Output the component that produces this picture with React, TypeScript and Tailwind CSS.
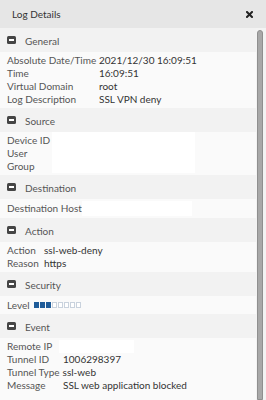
import React from "react";

function MinusIcon() {
  return (
    <span className="flex h-[8px] w-[9px] items-center justify-center rounded-[1.5px] bg-[#454545]">
      <span className="h-[1.5px] w-[5px] bg-white" />
    </span>
  );
}

function SectionHeader({ title }: { title: string }) {
  return (
    <div className="flex h-6 items-center gap-[9px] bg-[#f2f2f2] pl-[7px]">
      <MinusIcon />
      <span className="mt-[3px] text-[10px] text-[#555]">{title}</span>
    </div>
  );
}

interface RowProps {
  label: string;
  value?: React.ReactNode;
  labelWidth: string;
}

function Row({ label, value, labelWidth }: RowProps) {
  return (
    <div className="flex h-[13px] items-center whitespace-nowrap text-[10px] leading-[13px]">
      <span className={`${labelWidth} shrink-0 text-[#555]`}>{label}</span>
      <span className="text-[#333]">{value}</span>
    </div>
  );
}

function LevelBar({ level, total }: { level: number; total: number }) {
  return (
    <div className="flex gap-[1px]">
      {Array.from({ length: total }).map((_, i) => (
        <span
          key={i}
          className={
            i < level
              ? "h-[6px] w-[5px] bg-[#1f5c99]"
              : "h-[6px] w-[5px] border border-[#c9d2dd] bg-white"
          }
        />
      ))}
    </div>
  );
}

export default function App() {
  return (
    <div className="h-[400px] w-[266px] overflow-hidden bg-[#fafafa] font-['Lato',sans-serif]">
      <div className="flex h-[28px] items-center justify-between bg-[#e6e6e6] pl-[12px] pr-[13px]">
        <span className="text-[10px] text-[#333]">Log Details</span>
        <svg width="7" height="7" viewBox="0 0 7 7">
          <path d="M1 1 L6 6 M6 1 L1 6" stroke="#222" strokeWidth="2" strokeLinecap="square" />
        </svg>
      </div>

      <div className="flex">
        <div className="w-[256px] shrink-0">
          <SectionHeader title="General" />
          <div className="px-[7px] py-[2px]">
            <Row labelWidth="w-[92px]" label="Absolute Date/Time" value="2021/12/30 16:09:51" />
            <Row labelWidth="w-[92px]" label="Time" value="16:09:51" />
            <Row labelWidth="w-[92px]" label="Virtual Domain" value="root" />
            <Row labelWidth="w-[92px]" label="Log Description" value="SSL VPN deny" />
          </div>

          <SectionHeader title="Source" />
          <div className="flex items-start px-[7px]">
            <div className="w-[45px] shrink-0 whitespace-nowrap py-[2px] text-[10px] leading-[13px] text-[#555]">
              <div>Device ID</div>
              <div>User</div>
              <div>Group</div>
            </div>
            <div className="mb-[2px] h-[41px] w-[143px] bg-white" />
          </div>

          <SectionHeader title="Destination" />
          <div className="flex items-center px-[7px] py-[2px]">
            <span className="w-[75px] shrink-0 whitespace-nowrap text-[10px] leading-[15px] text-[#555]">Destination Host</span>
            <span className="h-[15px] w-[110px] bg-white" />
          </div>

          <SectionHeader title="Action" />
          <div className="px-[7px] py-[2px]">
            <Row labelWidth="w-[37px]" label="Action" value="ssl-web-deny" />
            <Row labelWidth="w-[37px]" label="Reason" value="https" />
          </div>

          <SectionHeader title="Security" />
          <div className="flex h-[18px] items-center px-[7px]">
            <span className="w-[27px] shrink-0 text-[10px] text-[#555]">Level</span>
            <LevelBar level={3} total={8} />
          </div>

          <SectionHeader title="Event" />
          <div className="px-[7px] py-[2px]">
            <div className="flex h-[13px] items-center whitespace-nowrap text-[10px] leading-[13px]">
              <span className="w-[52px] shrink-0 text-[#555]">Remote IP</span>
              <span className="h-[13px] w-[75px] bg-white" />
            </div>
            <Row labelWidth="w-[56px]" label="Tunnel ID" value="1006298397" />
            <Row labelWidth="w-auto mr-[3px]" label="Tunnel Type" value="ssl-web" />
            <Row labelWidth="w-[56px]" label="Message" value="SSL web application blocked" />
          </div>
        </div>

        <div className="flex h-[372px] w-[10px] shrink-0 justify-start bg-[#f3f3f3] pl-[1px] pt-[2px]">
          <div className="h-full w-[6px] rounded-t-full border border-[#8f8f8f] bg-[#a8a8a8]" />
        </div>
      </div>
    </div>
  );
}
